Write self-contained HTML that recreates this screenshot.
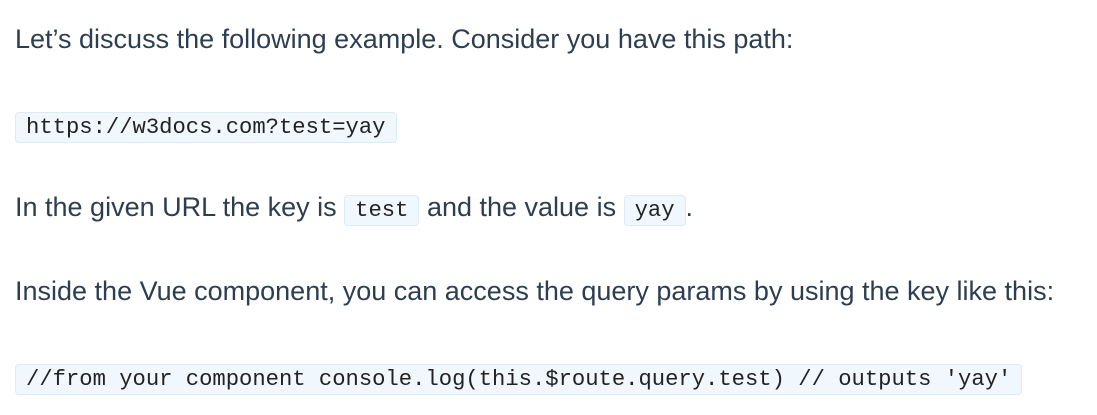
<!DOCTYPE html>
<html><head><meta charset="utf-8"><style>
body{margin:0;width:1097px;height:415px;background:#fff;position:relative;overflow:hidden;font-family:"Liberation Sans",Arial,sans-serif;font-size:27px;color:#2c3e50}
.l{position:absolute;left:15px;white-space:nowrap;line-height:32px}
code{font-family:"Liberation Mono","DejaVu Sans Mono",monospace;font-size:22.2px;background:#f0f8fe;border:1px solid #d8ecfa;border-radius:4px;padding:2px 10px;color:#222}
</style></head><body>
<div class="l" style="top:23px">Let’s discuss the following example. Consider you have this path:</div>
<div class="l" style="top:108px"><code>https://w3docs.com?test=yay</code></div>
<div class="l" style="top:191px">In the given URL the key is <code>test</code> and the value is <code>yay</code>.</div>
<div class="l" style="top:275px">Inside the Vue component, you can access the query params by using the key like this:</div>
<div class="l" style="top:360px"><code>//from your component console.log(this.$route.query.test) // outputs 'yay'</code></div>
</body></html>
